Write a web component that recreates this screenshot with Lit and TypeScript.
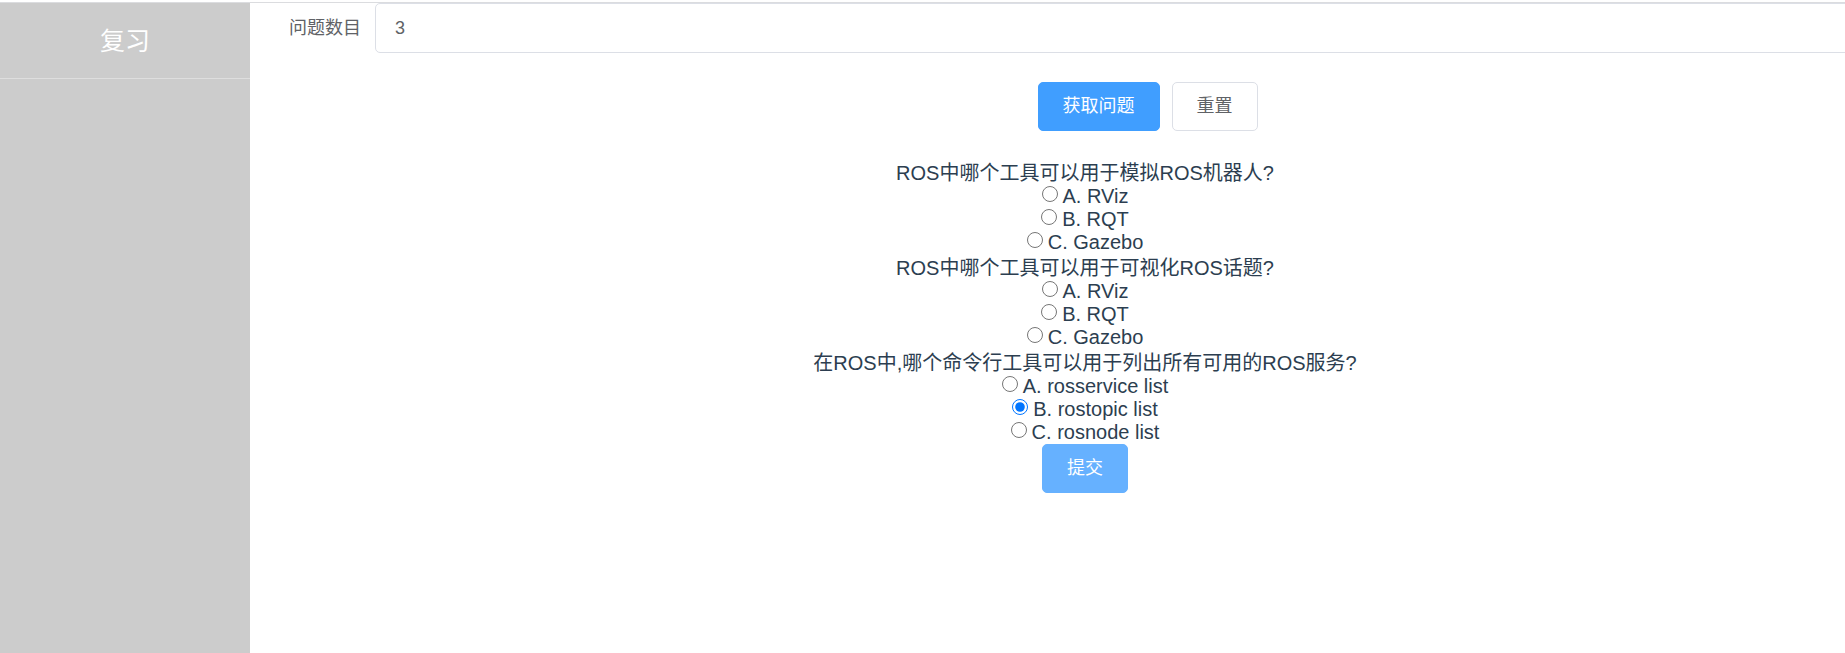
import { LitElement, html, css } from "lit";
import { customElement, state } from "lit/decorators.js";

interface Question {
  title: string;
  options: string[];
  answer: number;
}

@customElement("app-root")
export class AppRoot extends LitElement {
  static styles = css`
    :host {
      display: flex;
      flex-direction: column;
      box-sizing: border-box;
      min-height: 100vh;
      padding-top: 2px;
      overflow: hidden;
      background: #fff;
      color: #2c3e50;
      font-family: "Liberation Sans", "Noto Sans CJK SC", sans-serif;
      font-size: 20px;
      font-weight: 400;
    }
    .layout {
      flex: 1;
      display: flex;
      border-top: 1px solid #dbdcdf;
    }
    .sidebar {
      flex: none;
      width: 250px;
      background: #ccc;
    }
    .sidebar-link {
      display: block;
      box-sizing: border-box;
      height: 76px;
      line-height: 77px;
      border-bottom: 1px solid #dedede;
      color: #fff;
      font-size: 25px;
      text-align: center;
      text-decoration: none;
    }
    .main {
      flex: 1;
      min-width: 0;
      margin-right: -75px;
    }
    .row {
      display: flex;
      font-size: 18px;
      color: #606266;
    }
    .row-label {
      box-sizing: border-box;
      width: 125px;
      padding-right: 14px;
      line-height: 50px;
      text-align: right;
    }
    .count {
      flex: 1;
      min-width: 0;
      box-sizing: border-box;
      height: 50px;
      padding: 0 19px;
      border: 1px solid #dcdfe6;
      border-radius: 5px;
      background: #fff;
      color: #606266;
      font: inherit;
      outline: none;
    }
    .actions {
      display: flex;
      justify-content: center;
      gap: 12px;
      margin: 29px 0 28px;
      padding-left: 125px;
    }
    .button {
      box-sizing: border-box;
      height: 49px;
      padding: 0 24px 1px;
      border: 1px solid #dcdfe6;
      border-radius: 5px;
      background: #fff;
      color: #606266;
      font: inherit;
      font-size: 18px;
      line-height: 46px;
    }
    .primary {
      border-color: #409eff;
      background: #409eff;
      color: #fff;
    }
    .submit {
      border-color: #66b1ff;
      background: #66b1ff;
      color: #fff;
    }
    .quiz {
      text-align: center;
    }
    .question {
      margin: 0;
      padding: 0;
      border: 0;
      min-width: 0;
    }
    .title {
      width: 100%;
      padding: 2px 0 0;
      line-height: 24px;
    }
    .option {
      display: flex;
      justify-content: center;
      gap: 5px;
      line-height: 23px;
    }
    .radio {
      width: 16px;
      height: 16px;
      margin: 1px 0 0;
    }
  `;

  @state() private count = "3";

  @state() private questions: Question[] = [
    {
      title: "ROS中哪个工具可以用于模拟ROS机器人?",
      options: ["A. RViz", "B. RQT", "C. Gazebo"],
      answer: -1,
    },
    {
      title: "ROS中哪个工具可以用于可视化ROS话题?",
      options: ["A. RViz", "B. RQT", "C. Gazebo"],
      answer: -1,
    },
    {
      title: "在ROS中,哪个命令行工具可以用于列出所有可用的ROS服务?",
      options: ["A. rosservice list", "B. rostopic list", "C. rosnode list"],
      answer: 1,
    },
  ];

  private choose(question: number, answer: number) {
    this.questions = this.questions.map((q, i) =>
      i === question ? { ...q, answer } : q
    );
  }

  private reset() {
    this.count = "";
  }

  render() {
    return html`
      <div class="layout">
        <nav class="sidebar"><a class="sidebar-link" href="#">复习</a></nav>
        <main class="main">
          <div class="row">
            <label class="row-label" for="count">问题数目</label>
            <input
              class="count"
              id="count"
              type="text"
              .value=${this.count}
              @input=${(e: Event) => (this.count = (e.target as HTMLInputElement).value)}
            />
          </div>
          <div class="actions">
            <button class="button primary" type="button">获取问题</button>
            <button class="button" type="button" @click=${this.reset}>重置</button>
          </div>
          <form class="quiz" @submit=${(e: Event) => e.preventDefault()}>
            ${this.questions.map(
              (q, i) => html`
                <fieldset class="question">
                  <legend class="title">${q.title}</legend>
                  ${q.options.map(
                    (option, j) => html`
                      <label class="option">
                        <input
                          class="radio"
                          type="radio"
                          name=${`question-${i}`}
                          .checked=${q.answer === j}
                          @change=${() => this.choose(i, j)}
                        />
                        <span>${option}</span>
                      </label>
                    `
                  )}
                </fieldset>
              `
            )}
            <button class="button submit" type="submit">提交</button>
          </form>
        </main>
      </div>
    `;
  }
}
